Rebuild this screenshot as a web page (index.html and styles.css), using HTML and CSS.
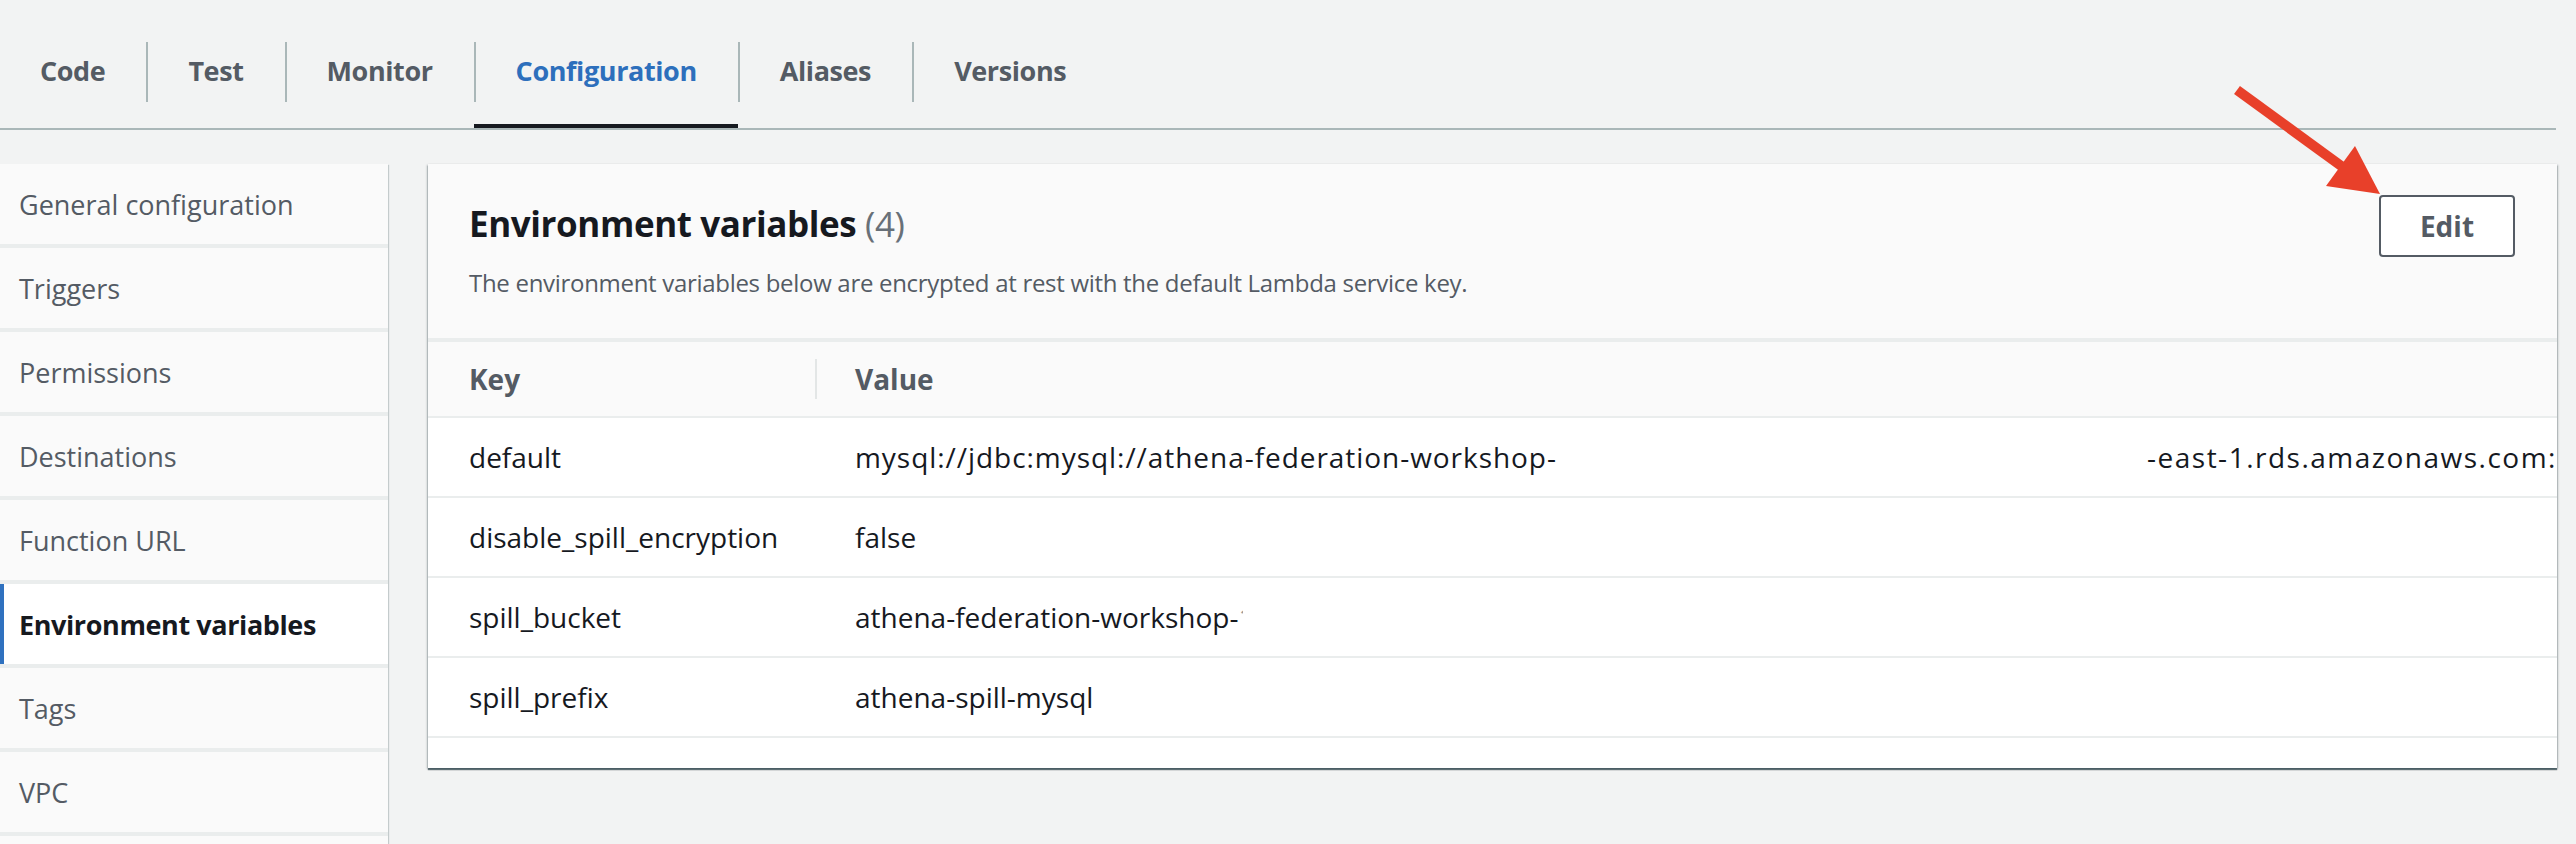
FILE: index.html
```html
<!DOCTYPE html>
<html lang="en">
<head>
<meta charset="utf-8">
<title>Lambda configuration - Environment variables</title>
<link rel="stylesheet" href="styles.css">
</head>
<body>
<div class="page">
  <nav class="tabs">
    <div class="tab">Code</div>
    <div class="tab sep">Test</div>
    <div class="tab sep">Monitor</div>
    <div class="tab sep active">Configuration</div>
    <div class="tab sep">Aliases</div>
    <div class="tab sep">Versions</div>
  </nav>

  <div class="main">
    <aside class="sidenav">
      <div class="nav-item">General configuration</div>
      <div class="nav-item">Triggers</div>
      <div class="nav-item">Permissions</div>
      <div class="nav-item">Destinations</div>
      <div class="nav-item">Function URL</div>
      <div class="nav-item active">Environment variables</div>
      <div class="nav-item">Tags</div>
      <div class="nav-item">VPC</div>
      <div class="nav-item">Monitoring and operations tools</div>
    </aside>

    <section class="panel">
      <header class="panel-header">
        <div class="panel-titles">
          <h2 class="panel-title">Environment variables <span class="count">(4)</span></h2>
          <p class="panel-desc">The environment variables below are encrypted at rest with the default Lambda service key.</p>
        </div>
        <button class="btn">Edit</button>
      </header>
      <div class="table">
        <div class="row head">
          <div class="cell key">Key</div>
          <div class="cell val divider">Value</div>
        </div>
        <div class="row">
          <div class="cell key">default</div>
          <div class="cell val"><span class="part1">mysql://jdbc:mysql://athena-federation-workshop-</span><span class="part2">-east-1.rds.amazonaws.com:3306/sales_db?user=admin</span></div>
        </div>
        <div class="row">
          <div class="cell key">disable_spill_encryption</div>
          <div class="cell val">false</div>
        </div>
        <div class="row">
          <div class="cell key">spill_bucket</div>
          <div class="cell val">athena-federation-workshop-<span class="clip">1</span></div>
        </div>
        <div class="row">
          <div class="cell key">spill_prefix</div>
          <div class="cell val">athena-spill-mysql</div>
        </div>
      </div>
    </section>
  </div>

  <svg class="arrow" width="180" height="130" viewBox="0 0 180 130" aria-hidden="true">
    <line x1="17" y1="10" x2="124" y2="88" stroke="#e8402a" stroke-width="10"/>
    <polygon points="160,114 106,106 135,66" fill="#e8402a"/>
  </svg>
</div>
</body>
</html>
```

FILE: styles.css
```css
* { box-sizing: border-box; }

html, body {
  margin: 0;
  padding: 0;
  background: #f2f3f3;
  font-family: "Open Sans", "Liberation Sans", sans-serif;
  color: #16191f;
}

body {
  height: 844px;
  overflow: hidden;
}

.page {
  position: relative;
  width: 2576px;
}

/* Tabs */
.tabs {
  display: flex;
  padding-top: 20px;
  margin-right: 20px;
  border-bottom: 2px solid #aab7b8;
}

.tab {
  height: 108px;
  padding: 0 41px 4px 41px;
  display: flex;
  align-items: center;
  font-size: 27px;
  letter-spacing: -0.4px;
  font-weight: 700;
  color: #545b64;
  border-bottom: 4px solid transparent;
}

.tab:first-child { padding-left: 40px; }

.tab.sep {
  background: linear-gradient(#aab7b8, #aab7b8) left center / 2px 60px no-repeat;
  padding-left: 42px;
}

.tab.active {
  color: #2d6fbc;
  border-bottom-color: #16191f;
}

/* Main layout */
.main {
  display: grid;
  grid-template-columns: 388px 2129px;
  column-gap: 40px;
  margin-top: 34px;
  align-items: start;
}

.sidenav {
  display: flex;
  flex-direction: column;
  gap: 4px;
  background: #eaeded;
  box-shadow: 2px 0 1px -1px #c4cbcc;
}

.nav-item {
  height: 80px;
  display: flex;
  align-items: center;
  padding-left: 19px;
  font-size: 27px;
  color: #545b64;
  background: #fafafa;
  white-space: nowrap;
}

.nav-item.active {
  background: #ffffff;
  color: #16191f;
  font-weight: 700;
  letter-spacing: -0.4px;
  border-left: 4px solid #2f71bf;
  padding-left: 15px;
}

/* Panel */
.panel {
  background: #ffffff;
  overflow: hidden;
  box-shadow: 0 2px 1px rgba(0, 28, 36, 0.55), 1px 1px 2px rgba(0, 28, 36, 0.25), -1px 1px 2px rgba(0, 28, 36, 0.25);
}

.panel-header {
  display: flex;
  justify-content: space-between;
  align-items: flex-start;
  padding: 31px 42px 39px 41px;
  background: #fafafa;
  border-bottom: 4px solid #eaeded;
}

.panel-title {
  margin: 4px 0 0 0;
  font-size: 35px;
  letter-spacing: -0.4px;
  line-height: 50px;
  font-weight: 700;
  color: #16191f;
}

.count {
  font-weight: 400;
  color: #687078;
}

.panel-desc {
  margin: 18px 0 0 0;
  font-size: 24px;
  letter-spacing: -0.3px;
  line-height: 32px;
  color: #545b64;
}

.btn {
  height: 62px;
  width: 136px;
  border: 2px solid #545b64;
  border-radius: 4px;
  background: #ffffff;
  font-family: inherit;
  font-size: 28px;
  font-weight: 700;
  color: #545b64;
  padding: 0;
}

/* Table */
.table {
  padding-bottom: 30px;
}

.row {
  display: grid;
  grid-template-columns: 387px 1fr;
  height: 80px;
  border-bottom: 2px solid #eaeded;
  font-size: 28px;
}

.row.head {
  height: 76px;
  background: #fafafa;
  font-weight: 700;
  color: #545b64;
}

.cell {
  display: flex;
  align-items: center;
  white-space: nowrap;
  overflow: hidden;
}

.cell.key { padding-left: 41px; }
.cell.val { padding-left: 40px; }

.cell.divider {
  background: linear-gradient(#e3e6e6, #e3e6e6) left center / 2px 40px no-repeat;
}

.part1 {
  flex: 0 0 1292px;
  letter-spacing: 0.95px;
}

.part2 {
  letter-spacing: 1.5px;
}

.clip {
  display: inline-block;
  width: 5px;
  overflow: hidden;
  color: #9a9a9a;
}

/* Annotation arrow */
.arrow {
  position: absolute;
  left: 2220px;
  top: 80px;
}
```
